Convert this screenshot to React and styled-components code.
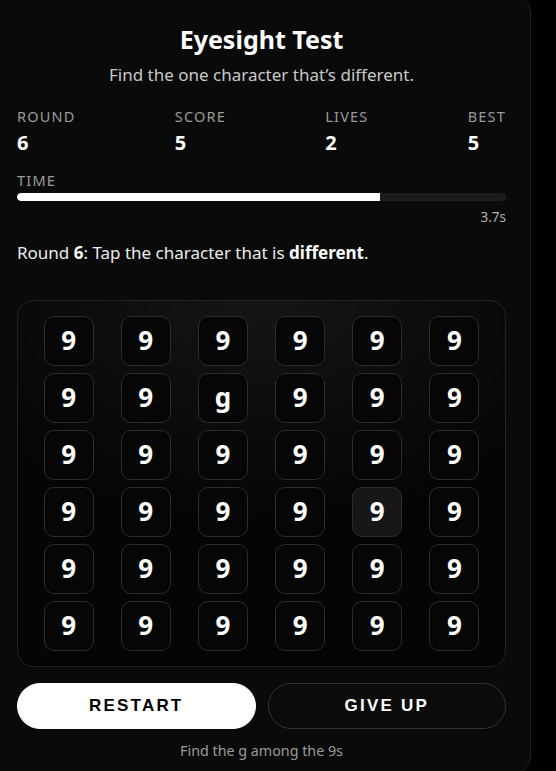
import React from "react";
import styled, { createGlobalStyle } from "styled-components";

const Global = createGlobalStyle`
  html, body { margin: 0; padding: 0; background: #000; }
  body { font-family: "Noto Sans", "Open Sans", sans-serif; color: #fff; overflow: hidden; }
  * { box-sizing: border-box; }
`;

const Card = styled.div`
  width: 540px;
  height: 782px;
  margin: -7px 0 0 -9px;
  background: #0a0a0a;
  border: 1px solid #222;
  border-radius: 20px;
  padding: 28px 24px 0 25px;
  display: flex;
  flex-direction: column;
`;

const Header = styled.header`
  text-align: center;
`;

const Title = styled.h1`
  margin: 0;
  font-size: 25px;
  line-height: 34px;
  font-weight: 700;
  color: #fff;
`;

const Subtitle = styled.p`
  margin: 7px 0 0;
  font-size: 17px;
  line-height: 23px;
  color: #c8c8c8;
`;

const Stats = styled.div`
  margin-top: 21px;
  display: flex;
  justify-content: space-between;
`;

const Stat = styled.div`
  display: flex;
  flex-direction: column;
`;

const Label = styled.span`
  font-size: 14.5px;
  line-height: 18px;
  letter-spacing: 1.2px;
  color: #9a9a9a;
  text-transform: uppercase;
`;

const Value = styled.span`
  margin-top: 6px;
  font-size: 20px;
  line-height: 24px;
  font-weight: 700;
  color: #fff;
`;

const TimeBlock = styled.div`
  margin-top: 16px;
  display: flex;
  flex-direction: column;
`;

const Track = styled.div`
  margin-top: 4px;
  height: 8px;
  border-radius: 4px;
  background: #1c1c1c;
  overflow: hidden;
`;

const Fill = styled.div`
  height: 100%;
  background: #fff;
  border-radius: 4px 0 0 4px;
`;

const TimeText = styled.span`
  margin-top: 7px;
  align-self: flex-end;
  font-size: 13.5px;
  line-height: 18px;
  color: #b0b0b0;
`;

const Instruction = styled.p`
  margin: 16px 0 0;
  font-size: 17px;
  line-height: 22px;
  color: #ececec;
  b { color: #fff; font-weight: 700; }
`;

const Board = styled.div`
  margin-top: 36px;
  border: 1px solid #222;
  border-radius: 16px;
  padding: 15px 12px;
  background: radial-gradient(ellipse 70% 60% at 50% 0%, #151515 0%, #0c0c0c 55%, #050505 100%);
  display: grid;
  grid-template-columns: repeat(6, 1fr);
  row-gap: 7px;
`;

const Cell = styled.button`
  justify-self: center;
  width: 50px;
  height: 50px;
  border-radius: 10px;
  border: 1px solid #2c2c2c;
  background: ${(p) => (p.$hover ? "#171717" : "#060606")};
  color: #fff;
  font-family: "Noto Sans", "Open Sans", sans-serif;
  font-weight: 700;
  font-size: 26px;
  line-height: 1;
  padding: 0 0 2px;
  display: flex;
  align-items: center;
  justify-content: center;
  cursor: pointer;
`;

const Actions = styled.div`
  margin-top: 16px;
  display: grid;
  grid-template-columns: 1fr 1fr;
  gap: 12px;
`;

const Btn = styled.button`
  height: 46px;
  border-radius: 23px;
  border: 1px solid ${(p) => (p.$primary ? "#fff" : "#333")};
  background: ${(p) => (p.$primary ? "#fff" : "#0b0b0b")};
  color: ${(p) => (p.$primary ? "#000" : "#fff")};
  font-family: "Liberation Sans", Arial, sans-serif;
  font-weight: 700;
  font-size: 17px;
  letter-spacing: 2.2px;
  cursor: pointer;
`;

const Footer = styled.p`
  margin: 12px 0 0;
  text-align: center;
  font-size: 14.3px;
  line-height: 20px;
  color: #9a9a9a;
`;

const stats = [
  ["Round", "6"],
  ["Score", "5"],
  ["Lives", "2"],
  ["Best", "5"],
];

export default function App() {
  const cells = Array.from({ length: 36 }, (_, i) => i);
  return (
    <>
      <Global />
      <Card>
        <Header>
          <Title>Eyesight Test</Title>
          <Subtitle>Find the one character that’s different.</Subtitle>
        </Header>
        <Stats>
          {stats.map(([l, v]) => (
            <Stat key={l}>
              <Label>{l}</Label>
              <Value>{v}</Value>
            </Stat>
          ))}
        </Stats>
        <TimeBlock>
          <Label>Time</Label>
          <Track>
            <Fill style={{ width: "74.3%" }} />
          </Track>
          <TimeText>3.7s</TimeText>
        </TimeBlock>
        <Instruction>
          Round <b>6</b>: Tap the character that is <b>different</b>.
        </Instruction>
        <Board>
          {cells.map((i) => (
            <Cell key={i} $hover={i === 22}>
              {i === 8 ? "g" : "9"}
            </Cell>
          ))}
        </Board>
        <Actions>
          <Btn $primary>RESTART</Btn>
          <Btn>GIVE UP</Btn>
        </Actions>
        <Footer>Find the g among the 9s</Footer>
      </Card>
    </>
  );
}
